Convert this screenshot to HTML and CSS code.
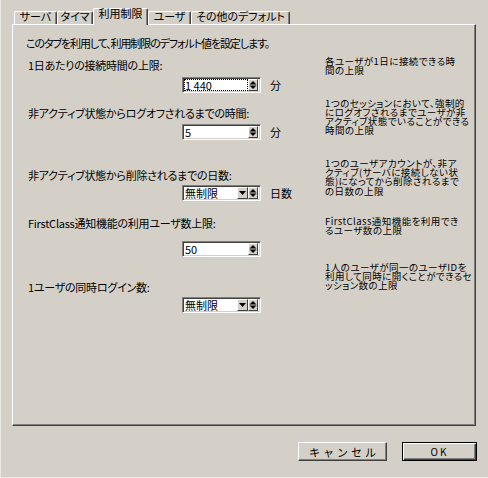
FILE: index.html
```html
<!DOCTYPE html>
<html lang="ja">
<head>
<meta charset="utf-8">
<link rel="stylesheet" href="styles.css">
</head>
<body>
<div class="dialog">
  <div class="tabs">
    <div class="tab tab-w1">サーバ</div>
    <div class="tab tab-w2">タイマ</div>
    <div class="tab tab-w3 selected">利用制限</div>
    <div class="tab tab-w4">ユーザ</div>
    <div class="tab tab-w5">その他のデフォルト</div>
  </div>
  <div class="panel">
    <p class="intro">このタブを利用して、利用制限のデフォルト値を設定します。</p>
    <div class="content">
      <div class="fields">
        <div class="field f1">
          <div class="label">1日あたりの接続時間の上限:</div>
          <div class="control-row">
            <div class="box">
              <div class="value focus">1 440</div>
              <div class="btn-spin"><svg width="8" height="10" viewBox="0 0 8 10"><polygon points="0.5,4.5 7.5,4.5 4,1" fill="#000"/><polygon points="0.5,5.5 7.5,5.5 4,9" fill="#000"/></svg></div>
            </div>
            <span class="unit">分</span>
          </div>
        </div>
        <div class="field f2">
          <div class="label">非アクティブ状態からログオフされるまでの時間:</div>
          <div class="control-row">
            <div class="box">
              <div class="value">5</div>
              <div class="btn-spin"><svg width="8" height="10" viewBox="0 0 8 10"><polygon points="0.5,4.5 7.5,4.5 4,1" fill="#000"/><polygon points="0.5,5.5 7.5,5.5 4,9" fill="#000"/></svg></div>
            </div>
            <span class="unit">分</span>
          </div>
        </div>
        <div class="field f3">
          <div class="label">非アクティブ状態から削除されるまでの日数:</div>
          <div class="control-row">
            <div class="box">
              <div class="value">無制限</div>
              <div class="btn-drop"><svg width="9" height="10" viewBox="0 0 9 10"><polygon points="1,3 8,3 4.5,7" fill="#000"/></svg></div>
              <div class="btn-spin"><svg width="8" height="10" viewBox="0 0 8 10"><polygon points="0.5,4.5 7.5,4.5 4,1" fill="#000"/><polygon points="0.5,5.5 7.5,5.5 4,9" fill="#000"/></svg></div>
            </div>
            <span class="unit">日数</span>
          </div>
        </div>
        <div class="field f4">
          <div class="label">FirstClass通知機能の利用ユーザ数上限:</div>
          <div class="control-row">
            <div class="box">
              <div class="value">50</div>
              <div class="btn-spin"><svg width="8" height="10" viewBox="0 0 8 10"><polygon points="0.5,4.5 7.5,4.5 4,1" fill="#000"/><polygon points="0.5,5.5 7.5,5.5 4,9" fill="#000"/></svg></div>
            </div>
          </div>
        </div>
        <div class="field f5">
          <div class="label">1ユーザの同時ログイン数:</div>
          <div class="control-row">
            <div class="box">
              <div class="value">無制限</div>
              <div class="btn-drop"><svg width="9" height="10" viewBox="0 0 9 10"><polygon points="1,3 8,3 4.5,7" fill="#000"/></svg></div>
              <div class="btn-spin"><svg width="8" height="10" viewBox="0 0 8 10"><polygon points="0.5,4.5 7.5,4.5 4,1" fill="#000"/><polygon points="0.5,5.5 7.5,5.5 4,9" fill="#000"/></svg></div>
            </div>
          </div>
        </div>
      </div>
      <div class="descs">
        <p class="desc d1">各ユーザが1日に接続できる時<br>間の上限</p>
        <p class="desc d2">1つのセッションにおいて、強制的<br>にログオフされるまでユーザが非<br>アクティブ状態でいることができる<br>時間の上限</p>
        <p class="desc d3">1つのユーザアカウントが、非ア<br>クティブ(サーバに接続しない状<br>態)になってから削除されるまで<br>の日数の上限</p>
        <p class="desc d4">FirstClass通知機能を利用でき<br>るユーザ数の上限</p>
        <p class="desc d5">1人のユーザが同一のユーザIDを<br>利用して同時に開くことができるセ<br>ッション数の上限</p>
      </div>
    </div>
  </div>
  <div class="buttons">
    <button class="btn btn-cancel">キャンセル</button>
    <button class="btn btn-ok">OK</button>
  </div>
</div>
</body>
</html>
```

FILE: styles.css
```css
html, body {
  margin: 0;
  padding: 0;
}
body {
  width: 488px;
  height: 478px;
  overflow: hidden;
  background: #d4d0c8;
  color: #000;
  font-family: "Noto Sans CJK JP", sans-serif;
  font-size: 11px;
  font-feature-settings: "palt";
}
.dialog {
  box-sizing: border-box;
  height: 478px;
  padding: 8px 12px 0 12px;
  box-shadow: inset 1px -1px 0 #ebe9e4;
}
.tabs {
  display: flex;
  align-items: flex-end;
  height: 16px;
  padding-left: 2px;
  position: relative;
  z-index: 1;
}
.tab {
  box-sizing: border-box;
  height: 13px;
  border-top: 1px solid #fff;
  border-left: 1px solid #fff;
  border-right: 1px solid #404040;
  box-shadow: inset -1px 0 0 #808080;
  border-top-left-radius: 2px;
  border-top-right-radius: 2px;
  background: #d4d0c8;
  text-align: center;
  line-height: 9px;
  white-space: nowrap;
}
.tab-w1 { width: 43px; }
.tab-w2 { width: 36px; }
.tab-w3 { width: 55px; }
.tab-w4 { width: 43px; }
.tab-w5 { width: 99px; }
.tab.selected {
  height: 17px;
  margin-bottom: -1px;
}
.panel {
  box-sizing: border-box;
  height: 402px;
  border: 1px solid;
  border-color: #fff #404040 #404040 #fff;
  box-shadow: inset -1px -1px 0 #808080;
  padding: 12px 0 0 13px;
}
.intro {
  margin: 0;
  line-height: 13px;
  white-space: nowrap;
  letter-spacing: -1.1px;
}
.content {
  display: flex;
}
.fields {
  flex: none;
  margin-left: 2px;
  width: 297px;
  display: flex;
  flex-direction: column;
}
.label {
  line-height: 12px;
  white-space: nowrap;
  letter-spacing: -0.25px;
}
.control-row {
  display: flex;
  align-items: center;
  gap: 9px;
  padding-left: 154px;
}
.f1 .label { margin-top: 9px; }
.f1 .control-row { margin-top: 6px; }
.f2 .label { margin-top: 14px; }
.f2 .control-row { margin-top: 5px; }
.f3 .label { margin-top: 29px; }
.f3 .control-row { margin-top: 4px; }
.f4 .label { margin-top: 16px; }
.f4 .control-row { margin-top: 12px; }
.f5 .label { margin-top: 24px; }
.f5 .control-row { margin-top: 4px; }
.box {
  box-sizing: border-box;
  width: 79px;
  height: 16px;
  display: flex;
  align-items: stretch;
  background: #fff;
  border: 1px solid;
  border-color: #808080 #fff #fff #808080;
  box-shadow: inset 1px 1px 0 #404040, inset -1px -1px 0 #d4d0c8;
  padding: 1px 2px 1px 1px;
}
.value {
  flex: 1;
  line-height: 12px;
  padding-left: 1px;
  white-space: nowrap;
}
.value.focus {
  outline: 1px dotted #000;
  outline-offset: -1px;
}
.btn-spin, .btn-drop {
  box-sizing: border-box;
  height: 12px;
  background: #d4d0c8;
  border: 1px solid;
  border-color: #fff #404040 #404040 #fff;
  display: flex;
  align-items: center;
  justify-content: center;
}
.btn-spin { width: 10px; }
.btn-drop { width: 11px; }
.btn-spin svg, .btn-drop svg { display: block; flex: none; }
.unit {
  line-height: 12px;
}
.descs {
  flex: none;
  display: flex;
  flex-direction: column;
}
.desc {
  margin: 0;
  font-size: 9.5px;
  line-height: 9.3px;
  letter-spacing: 0.45px;
  white-space: nowrap;
}
.d1 { margin-top: 7px; }
.d2 { margin-top: 23px; }
.d3 { margin-top: 23px; }
.d4 { margin-top: 21px; }
.d5 { margin-top: 27px; }
.buttons {
  display: flex;
  justify-content: flex-end;
  gap: 15px;
  margin-top: 16px;
  margin-right: -1px;
}
.btn {
  box-sizing: border-box;
  height: 19px;
  padding: 0;
  margin: 0;
  font-family: "Noto Sans CJK JP", sans-serif;
  font-size: 11px;
  line-height: 12px;
  color: #000;
  background: #d4d0c8;
  border: 1px solid;
  border-color: #fff #404040 #404040 #fff;
  box-shadow: inset -1px -1px 0 #808080;
}
.btn-cancel {
  width: 89px;
  letter-spacing: 3px;
  text-indent: 3px;
}
.btn-ok {
  width: 75px;
  border-color: #000;
  box-shadow: inset 1px 1px 0 #fff, inset -1px -1px 0 #404040, inset -2px -2px 0 #808080;
  font-size: 10px;
  letter-spacing: 2px;
}
```
